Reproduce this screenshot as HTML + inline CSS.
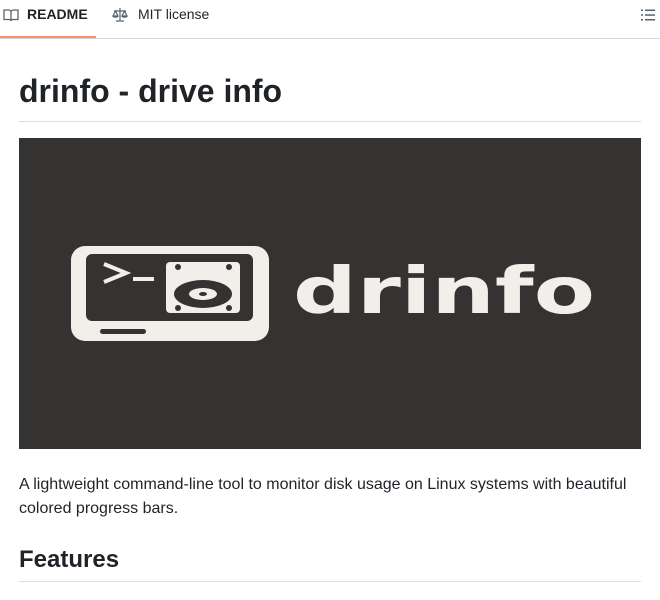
<!DOCTYPE html>
<html><head><style>
body{margin:0;width:660px;height:600px;overflow:hidden;background:#fff;font-family:"Liberation Sans",sans-serif;color:#1f2328}
.tabs{position:absolute;top:0;left:0;width:660px;height:38px;border-bottom:1px solid #d0d7de}
.tab{position:absolute;top:6px;font-size:14px;line-height:16px}
.ul{position:absolute;left:0;top:36px;width:96px;height:2px;background:#fd8c73}
h1{position:absolute;left:19px;top:72px;margin:0;font-size:32px;font-weight:bold;line-height:38px}
.hr1{position:absolute;left:19px;top:121px;width:622px;height:1px;background:#d8dee4}
.img{position:absolute;left:19px;top:138px;width:622px;height:311px;background:#343331}
p{position:absolute;left:19px;top:473px;margin:0;font-size:16px;line-height:24px;width:625px}
h2{position:absolute;left:19px;top:545px;margin:0;font-size:24px;font-weight:bold;line-height:30px}
.hr2{position:absolute;left:19px;top:581px;width:622px;height:1px;background:#d8dee4}
</style></head><body>
<div class="tabs">
<svg style="position:absolute;left:3px;top:7px" width="16" height="16" viewBox="0 0 16 16" fill="none" stroke="#59636e" stroke-width="1.3"><path d="M1 3h4.5c1.2 0 2.5 1 2.5 2v9c0-.8-1-1.5-2-1.5H1z M15 3h-4.5C9.3 3 8 4 8 5v9c0-.8 1-1.5 2-1.5h5z"/></svg>
<div class="tab" style="left:27px;font-weight:bold">README</div>
<svg style="position:absolute;left:112px;top:7px" width="16" height="16" viewBox="0 0 16 16" fill="none" stroke="#59636e" stroke-width="1.2"><path d="M8 1v13M4 14h8M2 4h12M3.5 4l-2.5 5h5zM12.5 4l-2.5 5h5z M1 9c0 1.5 5 1.5 5 0M10 9c0 1.5 5 1.5 5 0"/></svg>
<div class="tab" style="left:138px;color:#1f2328">MIT license</div>
<svg style="position:absolute;left:640px;top:7px" width="16" height="16" viewBox="0 0 16 16" fill="#59636e"><rect x="1" y="2.5" width="2" height="1.5"/><rect x="5" y="2.5" width="10" height="1.5"/><rect x="1" y="7.3" width="2" height="1.5"/><rect x="5" y="7.3" width="10" height="1.5"/><rect x="1" y="12" width="2" height="1.5"/><rect x="5" y="12" width="10" height="1.5"/></svg>
<div class="ul"></div>
</div>
<h1>drinfo - drive info</h1>
<div class="hr1"></div>
<div class="img"><svg width="622" height="311" viewBox="19 138 622 311">
<rect x="71" y="246" width="198" height="95" rx="14" fill="#f0efea"/>
<rect x="86" y="254" width="167" height="67" rx="6" fill="#343331"/>
<rect x="100" y="329" width="46" height="5" rx="2.5" fill="#343331"/>
<rect x="166" y="262" width="74" height="51" rx="4" fill="#f0efea"/>
<path d="M104 264l22 9l-22 9" fill="none" stroke="#f0efea" stroke-width="4"/>
<rect x="133" y="277" width="21" height="4" fill="#f0efea"/>
<ellipse cx="203" cy="294" rx="29" ry="14" fill="#343331"/>
<ellipse cx="203" cy="294" rx="14" ry="6" fill="#f0efea"/>
<ellipse cx="203" cy="294" rx="4" ry="2" fill="#343331"/>
<circle cx="178" cy="267" r="3" fill="#343331"/><circle cx="229" cy="267" r="3" fill="#343331"/>
<circle cx="178" cy="308" r="3" fill="#343331"/><circle cx="229" cy="308" r="3" fill="#343331"/>
<text x="293" y="313" font-family="DejaVu Sans" font-weight="bold" font-size="64" fill="#f0efea" textLength="302" lengthAdjust="spacingAndGlyphs">drinfo</text>
</svg></div>
<p>A lightweight command-line tool to monitor disk usage on Linux systems with beautiful colored progress bars.</p>
<h2>Features</h2>
<div class="hr2"></div>
</body></html>
